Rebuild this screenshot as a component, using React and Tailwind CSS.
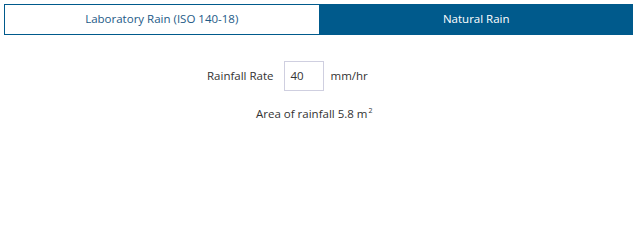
export default function App() {
  return (
    <div className="w-[638px] h-[225px] bg-white font-['Open_Sans',sans-serif] text-[11.5px]">
      <div className="pt-[4px] pl-[4px] pr-[5px]">
        <div className="flex h-[31px]">
          <button className="flex-1 border border-[#005a8c] text-[#1d5a87] bg-white flex items-center justify-center pb-[1px]">
            Laboratory Rain (ISO 140-18)
          </button>
          <button className="flex-1 bg-[#005a8c] text-white flex items-center justify-center pb-[1px]">
            Natural Rain
          </button>
        </div>
      </div>
      <div className="text-[#333]">
        <div className="flex items-center mt-[26px] pl-[207px]">
          <span>Rainfall Rate</span>
          <div className="ml-[10px] w-[40px] h-[30px] border border-[#cfcfe0] flex items-center pl-[6px] text-[#333]">40</div>
          <span className="ml-[7px]">mm/hr</span>
        </div>
        <div className="mt-[15px] pl-[256px] leading-[16px]">
          Area of rainfall 5.8 m<span className="relative -top-[5px] text-[7px] ml-[1px]">2</span>
        </div>
      </div>
    </div>
  );
}
